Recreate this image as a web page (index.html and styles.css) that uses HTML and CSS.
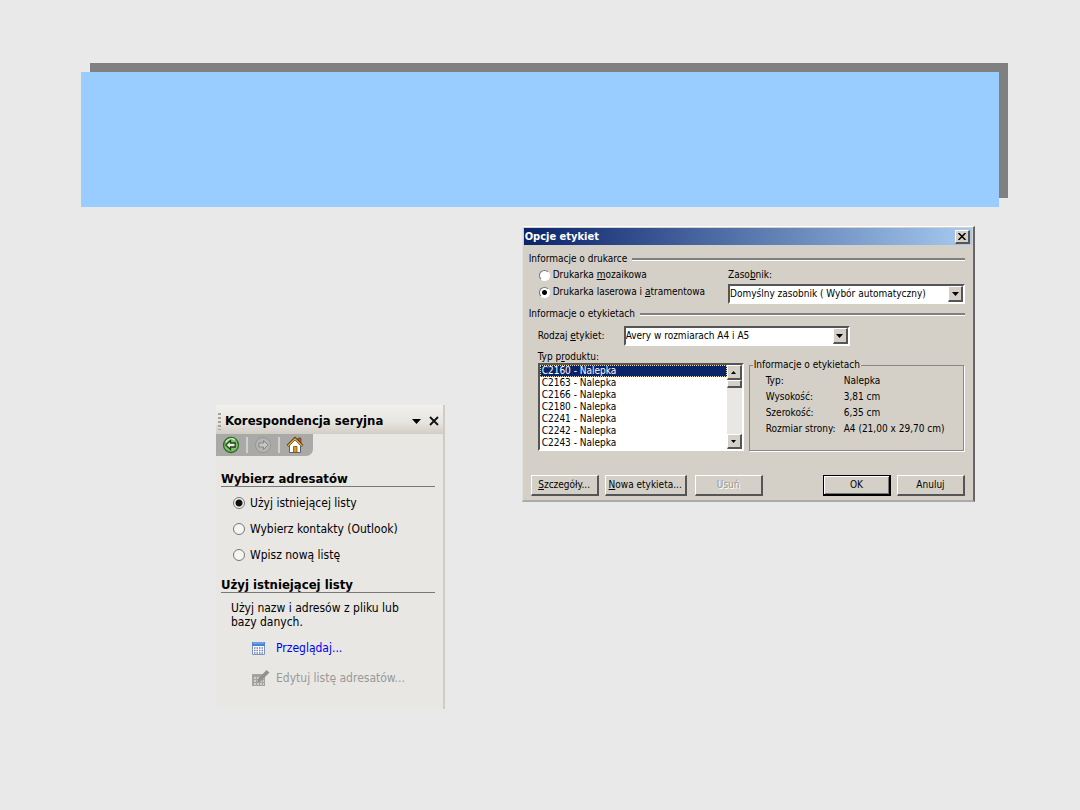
FILE: index.html
```html
<!DOCTYPE html>
<html lang="pl">
<head>
<meta charset="utf-8">
<title>Korespondencja seryjna</title>
<link rel="stylesheet" href="styles.css">
</head>
<body>
<header class="banner"></header>
<main class="content">
  <aside class="pane">
    <div class="pane-title">
      <span class="grip"></span>
      <h1>Korespondencja seryjna</h1>
      <button class="plain" type="button" aria-label="Menu"><svg width="9" height="5" viewBox="0 0 9 5"><path d="M0 0h9L4.500 5z"/></svg></button>
      <button class="plain" type="button" aria-label="Zamknij"><svg width="10" height="10" viewBox="0 0 10 10"><path d="M1 1l8 8M9 1L1 9" stroke="#111" stroke-width="1.800"/></svg></button>
    </div>
    <div class="pane-body">
      <nav class="tools">
        <button class="plain" type="button" aria-label="Wstecz"><svg width="18" height="18" viewBox="0 0 18 18"><circle cx="9" cy="9" r="7.500" fill="#7cc267" stroke="#2e6b28" stroke-width="1.300"/><path d="M4 6a6 6 0 0 1 9-2" fill="none" stroke="#c8eeb4" stroke-width="1.500"/><path d="M3.800 9l4.700-4.500V7h4.700v4H8.500v2.500z" fill="#e6f3df" stroke="#273c25" stroke-width="1.300"/></svg></button>
        <span class="sep"></span>
        <button class="plain" type="button" aria-label="Dalej" disabled><svg width="18" height="18" viewBox="0 0 18 18"><circle cx="9" cy="9" r="7.500" fill="#b5b5b3" stroke="#969694"/><path d="M14.200 9L9.500 4.500V7H4.800v4h4.700v2.500z" fill="#c6c6c4" stroke="#858583"/></svg></button>
        <span class="sep"></span>
        <button class="plain" type="button" aria-label="Strona główna"><svg width="18" height="18" viewBox="0 0 18 18"><path d="M12 2h3v6h-3z" fill="#b9572e" stroke="#5e4637" stroke-width=".7"/><path d="M3.500 9v7.500h11V9L9 3.500z" fill="#fff" stroke="#59616f"/><path d="M1.500 10L9 2.300l7.500 7.700" fill="none" stroke="#513b19" stroke-width="2.600"/><path d="M1.800 10L9 2.800l7.200 7.200" fill="none" stroke="#efb43d" stroke-width="1.200"/><path d="M7.500 10.500h3.500v6H7.500z" fill="#dc9825" stroke="#765020" stroke-width=".8"/></svg></button>
      </nav>
      <h2>Wybierz adresatów</h2>
      <div class="choices">
        <label><input type="radio" name="src" checked>Użyj istniejącej listy</label>
        <label><input type="radio" name="src">Wybierz kontakty (Outlook)</label>
        <label><input type="radio" name="src">Wpisz nową listę</label>
      </div>
      <h2>Użyj istniejącej listy</h2>
      <p>Użyj nazw i adresów z pliku lub bazy danych.</p>
      <div class="links">
        <a href="#"><svg width="18" height="16" viewBox="0 0 18 16"><path d="M.5 2.500h12v12H.5z" fill="#fff" stroke="#7894c6"/><path d="M0 2h13v4H0z" fill="#4d82d6"/><path d="M1 3h11" stroke="#91b9f3"/><path d="M2 8h10M2 10.500h10M2 13h10" stroke="#6c82ac" stroke-width="1.300" stroke-dasharray="1.500 1"/></svg>Przeglądaj...</a>
        <a class="off" aria-disabled="true"><svg width="18" height="18" viewBox="0 0 18 18"><path d="M0 5h13v12H0z" fill="#a3a3a1"/><path d="M2 9h10M2 12h10M2 15h10" stroke="#dededb" stroke-width="1.500" stroke-dasharray="2 1"/><path d="M5 14l1-4 8.500-9 3 2.500-9 9z" fill="#91918f"/></svg>Edytuj listę adresatów...</a>
      </div>
    </div>
  </aside>

  <section class="dialog">
    <div class="titlebar"><h1>Opcje etykiet</h1><button class="btn close" type="button" aria-label="Zamknij"><svg width="8" height="7" viewBox="0 0 8 7"><path d="M.5 0l7 7M7.500 0l-7 7" stroke="#000" stroke-width="1.500"/></svg></button></div>
    <form class="form">
      <div class="rule">Informacje o drukarce</div>
      <div class="printer">
        <div class="radios">
          <label><input type="radio" name="printer"><span>Drukarka <u>m</u>ozaikowa</span></label>
          <label><input type="radio" name="printer" checked><span>Drukarka laserowa i <u>a</u>tramentowa</span></label>
        </div>
        <div class="tray">
          <label for="tray">Zaso<u>b</u>nik:</label>
          <div class="combo"><select id="tray"><option>Domyślny zasobnik ( Wybór automatyczny)</option></select><span class="btn arrow"><svg width="7" height="4" viewBox="0 0 7 4"><path d="M0 0h7L3.500 4z"/></svg></span></div>
        </div>
      </div>
      <div class="rule">Informacje o etykietach</div>
      <div class="kind">
        <label for="kind">Rodzaj <u>e</u>tykiet:</label>
        <div class="combo"><select id="kind"><option>Avery w rozmiarach A4 i A5</option></select><span class="btn arrow"><svg width="7" height="4" viewBox="0 0 7 4"><path d="M0 0h7L3.500 4z"/></svg></span></div>
      </div>
      <label class="product" for="product">Typ p<u>r</u>oduktu:</label>
      <div class="details">
        <div class="list">
          <select id="product" size="7">
            <option selected>C2160 - Nalepka</option><option>C2163 - Nalepka</option><option>C2166 - Nalepka</option><option>C2180 - Nalepka</option><option>C2241 - Nalepka</option><option>C2242 - Nalepka</option><option>C2243 - Nalepka</option>
          </select>
          <div class="scroll">
            <button class="btn" type="button" aria-label="W górę"><svg width="5" height="3" viewBox="0 0 5 3"><path d="M0 3h5L2.500 0z"/></svg></button>
            <span class="btn thumb"></span>
            <button class="btn last" type="button" aria-label="W dół"><svg width="5" height="3" viewBox="0 0 5 3"><path d="M0 0h5L2.500 3z"/></svg></button>
          </div>
        </div>
        <fieldset>
          <legend>Informacje o etykietach</legend>
          <dl><dt>Typ:</dt><dd>Nalepka</dd><dt>Wysokość:</dt><dd>3,81 cm</dd><dt>Szerokość:</dt><dd>6,35 cm</dd><dt>Rozmiar strony:</dt><dd>A4 (21,00 x 29,70 cm)</dd></dl>
        </fieldset>
      </div>
      <div class="actions">
        <button class="btn" type="button"><span><u>S</u>zczegóły...</span></button>
        <button class="btn wide" type="button"><span><u>N</u>owa etykieta...</span></button>
        <button class="btn" type="button" disabled>Usuń</button>
        <button class="btn default" type="button">OK</button>
        <button class="btn" type="button">Anuluj</button>
      </div>
    </form>
  </section>
</main>
</body>
</html>
```
FILE: styles.css
```css
* { box-sizing: border-box; }
body { margin: 0; background: #e9e9e9; color: #000; font-family: "DejaVu Sans Condensed", "DejaVu Sans", sans-serif; font-stretch: condensed; }
h1, h2, p, dl, dd { margin: 0; }
button, select, input { font: inherit; color: inherit; margin: 0; }
svg { display: block; flex: none; }
.banner { height: 135px; margin: 72px 7.5% 0; background: #99ccff; box-shadow: 9px -9px 0 #808080; }
.content { display: flex; align-items: flex-start; gap: 77px; padding: 19px 105px 0 20%; }

.pane { flex: 229 1 0; min-width: 0; margin-top: 179px; padding-bottom: 23px; background: #e8e7e3; border-right: 2px solid #cfccc3; font-size: 12px; line-height: 14px; }
.plain { display: grid; place-items: center; padding: 0; border: 0; background: none; }
.pane-title { display: flex; align-items: center; gap: 8px; height: 29px; padding: 3px 4px 0 2px; background: linear-gradient(#f0f0ed, #e7e5e0 60%, #d2cdc4); }
.pane-title h1 { flex: 1; margin-left: -4px; font-size: 13px; white-space: nowrap; }
.grip { width: 3px; height: 17px; background: repeating-linear-gradient(#a5a39e 0 2px, transparent 2px 4px); }
.tools { display: flex; align-items: center; gap: 6px; width: 97px; height: 22px; padding-left: 6px; background: #a9a9a7; border-radius: 0 0 7px 0; }
.sep { width: 2px; height: 16px; background: #d0d0cd; }
.pane h2 { margin: 15px 8px 0 5px; height: 16px; border-bottom: 1px solid #777; font-size: 13px; line-height: 16px; }
.choices { display: grid; gap: 12px; padding: 9px 0 0 17px; }
.choices label { display: flex; align-items: center; gap: 5px; }
.choices input { appearance: none; width: 12px; height: 12px; border: 1px solid #777; border-radius: 50%; background: #f5f5f2; }
.choices input:checked { background: radial-gradient(circle, #111 0 3px, #f5f5f2 4px); }
.pane p { padding: 8px 36px 0 15px; }
.links { display: grid; gap: 14px; padding: 11px 0 0 36px; }
.links a { display: flex; align-items: center; gap: 6px; height: 16px; color: #0000f0; text-decoration: none; white-space: nowrap; }
.links .off { color: #999; }

.dialog { flex: 453 1 0; min-width: 0; padding: 1px; background: #d4d0c8; border: solid; border-width: 1px 2px 2px 1px; border-color: #fff #666 #aaa #e4e2de; font-size: 10px; line-height: 12px; }
.titlebar { display: flex; align-items: center; justify-content: space-between; height: 17px; padding: 0 2px 0 1px; background: linear-gradient(90deg, #0a246a, #a6caf0); color: #fff; }
.titlebar h1 { font-size: 11px; line-height: 16px; }
.btn { display: grid; place-items: center; padding: 0; background: #d4d0c8; color: #000; border: solid; border-width: 1px 2px 2px 1px; border-color: #fff #555 #555 #fff; }
.close { width: 15px; height: 14px; }
.form { padding: 8px 7px 3px 5px; }
.rule { display: flex; align-items: center; gap: 5px; height: 12px; }
.rule::after { content: ""; flex: 1; height: 2px; background: #808080; border-bottom: 1px solid #fff; }
.printer { display: flex; justify-content: space-between; padding: 4px 0 4px 10px; }
.radios { display: grid; gap: 5px; align-content: start; }
.radios label { display: flex; align-items: center; gap: 3px; }
.radios input { appearance: none; width: 11px; height: 11px; border: 1px solid; border-color: #777 #fff #fff #777; border-radius: 50%; background: #fff; }
.radios input:checked { background: radial-gradient(circle, #000 0 2px, #fff 3px); }
.tray { width: 237px; }
.combo { position: relative; height: 20px; border: 2px solid; border-color: #555 #fff #fff #555; background: #fff; }
.tray .combo { margin-top: 3px; }
.combo select { appearance: none; display: block; width: 100%; height: 16px; padding: 0 14px 0 0; border: 0; background: #fff; }
.arrow { position: absolute; top: 0; right: 0; width: 15px; height: 16px; pointer-events: none; }
.kind { display: flex; align-items: center; padding: 6px 0 5px 9px; }
.kind label { width: 86px; }
.kind .combo { width: 226px; }
.product { display: block; padding-left: 9px; }
.details { display: flex; gap: 5px; padding: 0 1px 0 9px; }
.list { display: flex; width: 206px; height: 88px; border: 2px solid; border-color: #555 #fff #fff #555; }
.list select { flex: 1; min-width: 0; height: 84px; padding: 0; border: 0; border-radius: 0; outline: 0; background: #fff; overflow: hidden; }
.list option { height: 12px; min-height: 12px; padding: 0 2px; line-height: 12px; }
.list option:checked { background: #0a246a linear-gradient(#0a246a, #0a246a); -webkit-text-fill-color: #fff; outline: 1px dotted #f0d890; outline-offset: -1px; }
.scroll { display: flex; flex-direction: column; width: 15px; background: #e9e7e3; }
.scroll .btn { width: 15px; height: 15px; }
.scroll .thumb { height: 8px; }
.scroll .last { margin-top: auto; }
fieldset { flex: 1; min-width: 0; margin: -4px 0 0; padding: 4px 0 0 16px; border: 1px solid #888; outline: 0; box-shadow: 1px 1px 0 #fff; }
legend { margin-left: -13px; padding: 0 1px; }
dl { display: grid; grid-template-columns: 78px auto; row-gap: 4px; white-space: nowrap; }
.actions { display: flex; gap: 6px; padding: 24px 0 0 2px; }
.actions .btn { width: 68px; height: 21px; white-space: nowrap; }
.actions .wide { width: 82px; margin-right: 2px; }
.actions .default { margin-left: auto; border-color: #000; box-shadow: inset 1px 1px 0 #fff, inset -1px -1px 0 #777; border-width: 1px 2px 2px 1px; }
.actions .btn:disabled { color: #999; text-shadow: 1px 1px 0 #fff; }
```
